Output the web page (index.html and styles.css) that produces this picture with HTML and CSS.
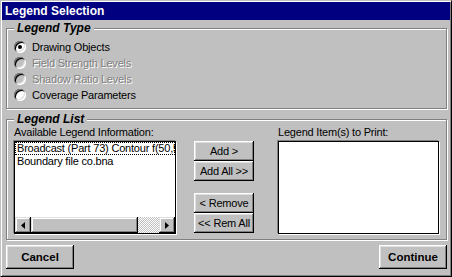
FILE: index.html
```html
<!DOCTYPE html>
<html lang="en">
<head>
    <meta charset="UTF-8">
    <meta name="viewport" content="width=device-width, initial-scale=1.0">
    <title>Legend Selection</title>
    <link rel="stylesheet" href="styles.css">
</head>
<body>
    <div class="window">
        <div class="titlebar">Legend Selection</div>

        <div class="dialog">
            <fieldset class="group group-type">
                <legend>Legend Type</legend>
                <label class="option"><span class="radio checked"></span>Drawing Objects</label>
                <label class="option disabled"><span class="radio"></span>Field Strength Levels</label>
                <label class="option disabled"><span class="radio"></span>Shadow Ratio Levels</label>
                <label class="option"><span class="radio"></span>Coverage Parameters</label>
            </fieldset>

            <fieldset class="group group-list">
                <legend>Legend List</legend>
                <div class="list-cols">
                    <div class="col col-left">
                        <div class="caption">Available Legend Information:</div>
                        <div class="listbox">
                            <div class="items">
                                <div class="item focus">Broadcast (Part 73) Contour f(50,50)</div>
                                <div class="item">Boundary file co.bna</div>
                            </div>
                            <div class="hscroll">
                                <span class="sb-btn">
                                    <svg width="4" height="7" viewBox="0 0 4 7"><polygon points="4,0 4,7 0,3.5" fill="#000"/></svg>
                                </span>
                                <span class="sb-thumb"></span>
                                <span class="sb-track"></span>
                                <span class="sb-btn">
                                    <svg width="4" height="7" viewBox="0 0 4 7"><polygon points="0,0 0,7 4,3.5" fill="#000"/></svg>
                                </span>
                            </div>
                        </div>
                    </div>

                    <div class="mover">
                        <div class="btn-pair">
                            <button class="btn">Add &gt;</button>
                            <button class="btn">Add All &gt;&gt;</button>
                        </div>
                        <div class="btn-pair">
                            <button class="btn">&lt; Remove</button>
                            <button class="btn">&lt;&lt; Rem All</button>
                        </div>
                    </div>

                    <div class="col col-right">
                        <div class="caption">Legend Item(s) to Print:</div>
                        <div class="listbox"></div>
                    </div>
                </div>
            </fieldset>

            <div class="actions">
                <button class="btn cmd">Cancel</button>
                <button class="btn cmd">Continue</button>
            </div>
        </div>
    </div>
</body>
</html>
```

FILE: styles.css
```css
body {
    margin: 0;
    font-family: "Liberation Sans", Arial, sans-serif;
    font-size: 11px;
    letter-spacing: -0.2px;
    color: #000;
    background-color: #c0c0c0;
}

.window {
    box-sizing: border-box;
    width: 452px;
    height: 277px;
    padding: 1px;
    background-color: #c0c0c0;
    border: 1px solid;
    border-color: #c0c0c0 #000 #000 #c0c0c0;
    box-shadow: inset 1px 1px #fff, inset -1px -1px #808080;
}

.titlebar {
    height: 18px;
    line-height: 18px;
    padding-left: 3px;
    background-color: #000080;
    color: #fff;
    font-size: 12px;
    font-weight: bold;
    letter-spacing: 0;
}

.dialog {
    padding: 0 3px 0 4px;
}

/* etched group boxes */
.group {
    margin: 0;
    border: 1px solid #808080;
    box-shadow: inset 1px 1px #fff, 1px 1px #fff;
    min-inline-size: 0;
}

.group legend {
    padding: 0 3px;
    margin: 0;
    line-height: 14px;
    font-size: 12px;
    font-weight: bold;
    font-style: italic;
    letter-spacing: 0;
    background-color: #c0c0c0;
}

.group-type {
    margin-top: 1px;
    padding: 4px 7px 5px 7px;
}

.option {
    display: flex;
    align-items: center;
    height: 16px;
}

.option.disabled {
    color: #808080;
    text-shadow: 1px 1px 0 #fff;
}

.radio {
    position: relative;
    width: 12px;
    height: 12px;
    margin-right: 6px;
    border-radius: 50%;
    background-color: #fff;
    box-shadow: inset 1px 1px #808080, inset -1px -1px #fff, inset 2px 2px #000, inset -2px -2px #dfdfdf;
}

.disabled .radio {
    background-color: #c0c0c0;
}

.radio.checked::after {
    content: "";
    position: absolute;
    left: 4px;
    top: 4px;
    width: 4px;
    height: 4px;
    border-radius: 50%;
    background-color: #000;
}

.group-list {
    margin-top: 3px;
    padding: 0 5px 5px 7px;
}

.list-cols {
    display: flex;
}

.col-left {
    width: 162px;
}

.col-right {
    width: 161px;
}

.caption {
    line-height: 13px;
    margin-bottom: 2px;
}

.listbox {
    box-sizing: border-box;
    height: 93px;
    display: flex;
    flex-direction: column;
    background-color: #fff;
    border: 1px solid #000;
    box-shadow: -1px -1px #808080, 1px 1px #fff;
}

.items {
    flex: 1;
    overflow: hidden;
}

.item {
    height: 13px;
    line-height: 13px;
    padding-left: 2px;
    white-space: nowrap;
    overflow: hidden;
}

.item.focus {
    outline: 1px dotted #000;
    outline-offset: -1px;
}

.hscroll {
    display: flex;
    height: 16px;
}

.sb-btn,
.sb-thumb {
    box-sizing: border-box;
    display: flex;
    align-items: center;
    justify-content: center;
    background-color: #c0c0c0;
    box-shadow: inset -1px -1px #000, inset 1px 1px #dfdfdf, inset -2px -2px #808080, inset 2px 2px #fff;
}

.sb-btn {
    width: 16px;
}

.sb-thumb {
    width: 107px;
}

.sb-track {
    flex: 1;
    background: repeating-conic-gradient(#fff 0 25%, #c0c0c0 0 50%) 0 0 / 2px 2px;
}

.mover {
    width: 60px;
    margin: 0 24px 0 18px;
    display: flex;
    flex-direction: column;
    gap: 12px;
    padding-top: 15px;
}

.btn-pair {
    display: flex;
    flex-direction: column;
}

.btn {
    height: 20px;
    padding: 0;
    border: none;
    font-family: inherit;
    font-size: 11px;
    letter-spacing: -0.2px;
    color: #000;
    background-color: #c0c0c0;
    box-shadow: inset -1px -1px #000, inset 1px 1px #fff, inset -2px -2px #808080, inset 2px 2px #dfdfdf;
}

.actions {
    display: flex;
    justify-content: space-between;
    margin-top: 5px;
}

.cmd {
    width: 68px;
    height: 24px;
    font-size: 11.5px;
    font-weight: bold;
    letter-spacing: 0;
}
```
